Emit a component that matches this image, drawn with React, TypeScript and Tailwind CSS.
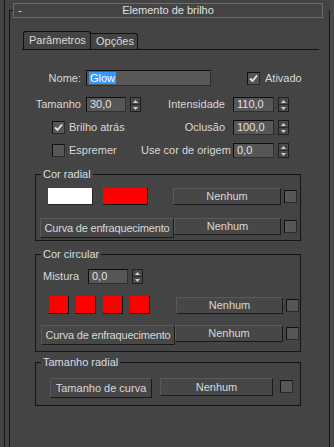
import React from "react";

const Check = () => (
  <svg width="9" height="9" viewBox="0 0 9 9" className="block">
    <polyline points="1,4.5 3.5,7 8,1.5" fill="none" stroke="#e8e8e8" strokeWidth="1.8" />
  </svg>
);

const CheckBox = ({ checked = false }: { checked?: boolean }) => (
  <div className="w-[13px] h-[13px] shrink-0 border border-t-[#111] border-l-[#111] border-b-[#2a2a2a] border-r-[#2a2a2a] bg-[#565656] flex items-center justify-center">
    {checked ? <Check /> : null}
  </div>
);

const Spinner = () => (
  <div className="w-[11px] h-[15px] shrink-0 border border-[#1e1e1e] bg-[#4a4a4a] flex flex-col">
    <div className="flex-1 flex items-center justify-center border-b border-[#2a2a2a]">
      <svg width="5" height="3" viewBox="0 0 5 3" className="block">
        <polygon points="0,3 2.5,0 5,3" fill="#cfcfcf" />
      </svg>
    </div>
    <div className="flex-1 flex items-center justify-center">
      <svg width="5" height="3" viewBox="0 0 5 3" className="block">
        <polygon points="0,0 2.5,3 5,0" fill="#cfcfcf" />
      </svg>
    </div>
  </div>
);

const Input = ({ value, w }: { value: string; w: string }) => (
  <div
    className={`${w} h-[15px] shrink-0 bg-[#565656] border border-t-[#0e0e0e] border-l-[#0e0e0e] border-b-[#303030] border-r-[#303030] pl-[3px] leading-[13px] text-[#e2e2e2]`}
  >
    {value}
  </div>
);

const Btn = ({ children, cls }: { children: React.ReactNode; cls: string }) => (
  <div
    className={`${cls} shrink-0 bg-[#474747] border border-t-[#5a5a5a] border-l-[#5a5a5a] border-b-[#1a1a1a] border-r-[#1a1a1a] flex items-center justify-center text-[#d8d8d8] whitespace-nowrap`}
  >
    {children}
  </div>
);

const Group = ({ label, cls, children }: { label: string; cls: string; children: React.ReactNode }) => (
  <div className={`relative ml-[25px] w-[266px] border border-[#151515] ${cls}`}>
    <div className="absolute left-[5px] -top-[8px] px-[2px] bg-[#444444] leading-[14px] text-[#d8dde2]">
      {label}
    </div>
    {children}
  </div>
);

export default function App() {
  return (
    <div
      className="w-[334px] h-[447px] bg-[#444444] flex overflow-hidden text-[11px] text-[#d8d8d8]"
      style={{ fontFamily: '"Liberation Sans", Arial, sans-serif' }}
    >
      <div className="w-[4px] shrink-0" />
      <div className="w-[1px] shrink-0 bg-[#161616]" />
      <div className="w-[4px] shrink-0" />
      <div className="w-[321px] shrink-0 flex flex-col">
        {/* header */}
        <div className="relative z-10 mt-[3px] ml-[4px] w-[310px] h-[15px] border border-[#6c6c6c] bg-[#444444] flex items-center">
          <span className="absolute left-[4px] top-[-1px] text-[#e0e0e0] leading-[14px]">-</span>
          <span className="flex-1 text-center text-[#e0e0e0] leading-[13px]">Elemento de brilho</span>
        </div>
        {/* rollout body */}
        <div className="-mt-[8px] flex-1 border-l border-r border-[#161616] relative flex flex-col">
          <div className="absolute left-0 top-0 w-[3px] h-[1px] bg-[#161616]" />
          {/* tabs */}
          <div className="mt-[21px] ml-[12px] w-[297px] h-[19px] border-b border-[#111] flex items-end">
            <div className="ml-[1px] w-[68px] h-[18px] border-t border-l border-r border-[#111] rounded-t-[3px] pl-[5px] leading-[16px] text-[#dadada]">
              Parâmetros
            </div>
            <div className="w-[47px] h-[16px] border-t border-r border-[#111] rounded-tr-[3px] pl-[5px] leading-[14px] text-[#dadada]">
              Opções
            </div>
          </div>

          {/* Nome row */}
          <div className="mt-[20px] h-[16px] flex items-center">
            <div className="w-[71px] text-right">Nome:</div>
            <div className="ml-[5px] w-[125px] h-[16px] bg-[#585858] border border-t-[#0e0e0e] border-l-[#0e0e0e] border-b-[#303030] border-r-[#303030] pl-[2px] pt-[1px] flex">
              <span className="bg-[#3399ff] text-white leading-[12px] h-[12px] px-[1px]">Glow</span>
            </div>
            <div className="ml-[36px]"><CheckBox checked /></div>
            <span className="ml-[5px]">Ativado</span>
          </div>

          {/* Tamanho row */}
          <div className="mt-[11px] h-[15px] flex items-center">
            <div className="w-[131px] flex items-center">
              <div className="w-[71px] text-right">Tamanho</div>
              <div className="ml-[5px]"><Input value="30,0" w="w-[40px]" /></div>
              <div className="ml-[4px]"><Spinner /></div>
            </div>
            <div className="w-[84px] text-right">Intensidade</div>
            <div className="ml-[8px]"><Input value="110,0" w="w-[41px]" /></div>
            <div className="ml-[4px]"><Spinner /></div>
          </div>

          {/* Brilho row */}
          <div className="mt-[8px] h-[15px] flex items-center">
            <div className="w-[131px] flex items-center">
              <div className="ml-[42px]"><CheckBox checked /></div>
              <span className="ml-[4px]">Brilho atrás</span>
            </div>
            <div className="w-[84px] text-right">Oclusão</div>
            <div className="ml-[8px]"><Input value="100,0" w="w-[41px]" /></div>
            <div className="ml-[4px]"><Spinner /></div>
          </div>

          {/* Espremer row */}
          <div className="mt-[8px] h-[15px] flex items-center">
            <div className="w-[131px] flex items-center">
              <div className="ml-[42px]"><CheckBox /></div>
              <span className="ml-[4px]">Espremer</span>
            </div>
            <div className="w-[84px] text-right whitespace-nowrap">Use cor de origem</div>
            <div className="ml-[8px]"><Input value="0,0" w="w-[41px]" /></div>
            <div className="ml-[4px]"><Spinner /></div>
          </div>

          {/* Cor radial */}
          <Group label="Cor radial" cls="mt-[16px] pt-[13px] pb-[2px]">
            <div className="h-[17px] flex items-center">
              <div className="ml-[12px] w-[45px] h-[17px] bg-white border-b border-r border-[#222]" />
              <div className="ml-[10px] w-[45px] h-[17px] bg-[#ff0000] border-b border-r border-[#111]" />
              <Btn cls="ml-[25px] w-[108px] h-[17px]">Nenhum</Btn>
              <div className="ml-[3px]"><CheckBox /></div>
            </div>
            <div className="mt-[13px] h-[20px] flex items-start">
              <Btn cls="ml-[4px] w-[134px] h-[20px] tracking-[-0.2px]">Curva de enfraquecimento</Btn>
              <Btn cls="w-[107px] h-[17px]">Nenhum</Btn>
              <div className="ml-[3px] mt-[2px]"><CheckBox /></div>
            </div>
          </Group>

          {/* Cor circular */}
          <Group label="Cor circular" cls="mt-[13px] pt-[14px] pb-[6px]">
            <div className="h-[15px] flex items-center">
              <div className="ml-[7px] w-[45px]">Mistura</div>
              <Input value="0,0" w="w-[40px]" />
              <div className="ml-[4px]"><Spinner /></div>
            </div>
            <div className="mt-[12px] h-[18px] flex items-center">
              <div className="ml-[13px] w-[20px] h-[18px] bg-[#ff0000] border-b border-r border-[#111]" />
              <div className="ml-[7px] w-[20px] h-[18px] bg-[#ff0000] border-b border-r border-[#111]" />
              <div className="ml-[7px] w-[20px] h-[18px] bg-[#ff0000] border-b border-r border-[#111]" />
              <div className="ml-[7px] w-[20px] h-[18px] bg-[#ff0000] border-b border-r border-[#111]" />
              <Btn cls="ml-[26px] w-[107px] h-[17px]">Nenhum</Btn>
              <div className="ml-[3px]"><CheckBox /></div>
            </div>
            <div className="mt-[11px] h-[20px] flex items-start">
              <Btn cls="ml-[5px] w-[134px] h-[20px] tracking-[-0.2px]">Curva de enfraquecimento</Btn>
              <Btn cls="w-[108px] h-[17px]">Nenhum</Btn>
              <div className="ml-[3px] mt-[2px]"><CheckBox /></div>
            </div>
          </Group>

          {/* Tamanho radial */}
          <Group label="Tamanho radial" cls="mt-[10px] pt-[15px] pb-[7px]">
            <div className="h-[20px] flex items-start">
              <Btn cls="ml-[14px] w-[102px] h-[20px]">Tamanho de curva</Btn>
              <Btn cls="ml-[8px] w-[113px] h-[18px]">Nenhum</Btn>
              <div className="ml-[7px] mt-[2px]"><CheckBox /></div>
            </div>
          </Group>
        </div>
      </div>
      <div className="w-[4px] shrink-0 bg-[#4a4a4a]" />
    </div>
  );
}
